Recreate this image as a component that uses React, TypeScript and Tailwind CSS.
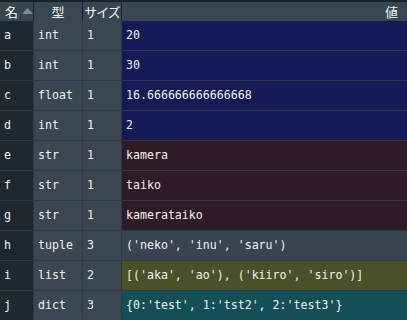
const rows = [
  { name: 'a', type: 'int', size: '1', value: '20', bg: 'bg-[#131a56]' },
  { name: 'b', type: 'int', size: '1', value: '30', bg: 'bg-[#131a56]' },
  { name: 'c', type: 'float', size: '1', value: '16.666666666666668', bg: 'bg-[#131a56]' },
  { name: 'd', type: 'int', size: '1', value: '2', bg: 'bg-[#131a56]' },
  { name: 'e', type: 'str', size: '1', value: 'kamera', bg: 'bg-[#2e1b25]' },
  { name: 'f', type: 'str', size: '1', value: 'taiko', bg: 'bg-[#2e1b25]' },
  { name: 'g', type: 'str', size: '1', value: 'kamerataiko', bg: 'bg-[#2e1b25]' },
  { name: 'h', type: 'tuple', size: '3', value: "('neko', 'inu', 'saru')", bg: 'bg-[#38444f]' },
  { name: 'i', type: 'list', size: '2', value: "[('aka', 'ao'), ('kiiro', 'siro')]", bg: 'bg-[#4a5028]' },
  { name: 'j', type: 'dict', size: '3', value: "{0:'test', 1:'tst2', 2:'test3'}", bg: 'bg-[#144f58]' },
]

const mono = "font-['DejaVu_Sans_Mono',monospace] text-[11.6px] text-[#f2f2f2]"
const cjk = "font-['Noto_Sans_CJK_JP',sans-serif] text-[13px] text-[#f2f2f2]"

export default function App() {
  return (
    <div className="w-[407px] h-[320px] overflow-hidden bg-[#19232d] pt-[2px]">
      {/* header */}
      <div className="grid grid-cols-[33px_48px_38px_1fr] gap-x-px h-[19px] bg-[#19232d]">
        <div className={`bg-[#37464f] flex items-center pl-[5px] gap-[4px] ${cjk}`}>
          <span className="leading-none">名</span>
          <svg width="11" height="6" viewBox="0 0 11 6" className="mt-[-1px]">
            <polygon points="5.5,0 11,6 0,6" fill="#7d8a93" />
          </svg>
        </div>
        <div className={`bg-[#37464f] flex items-center justify-center ${cjk}`}>
          <span className="leading-none">型</span>
        </div>
        <div className={`bg-[#37464f] flex items-center justify-center ${cjk}`}>
          <span className="leading-none tracking-[-1px]">サイズ</span>
        </div>
        <div className={`bg-[#37464f] flex items-center justify-end pr-[9px] ${cjk}`}>
          <span className="leading-none">値</span>
        </div>
      </div>

      {/* body */}
      <div className="grid grid-cols-[33px_48px_38px_1fr] gap-px bg-[#2d3b46]">
        {rows.map((r) => (
          <div key={r.name} className="contents">
            <div className={`h-[29px] bg-[#1e2831] flex items-center pl-[4px] ${mono}`}>{r.name}</div>
            <div className={`h-[29px] bg-[#3a4650] flex items-center pl-[4px] ${mono}`}>{r.type}</div>
            <div className={`h-[29px] bg-[#3a4650] flex items-center pl-[4px] ${mono}`}>{r.size}</div>
            <div className={`h-[29px] ${r.bg} flex items-center pl-[4px] whitespace-pre ${mono}`}>{r.value}</div>
          </div>
        ))}
      </div>
    </div>
  )
}
